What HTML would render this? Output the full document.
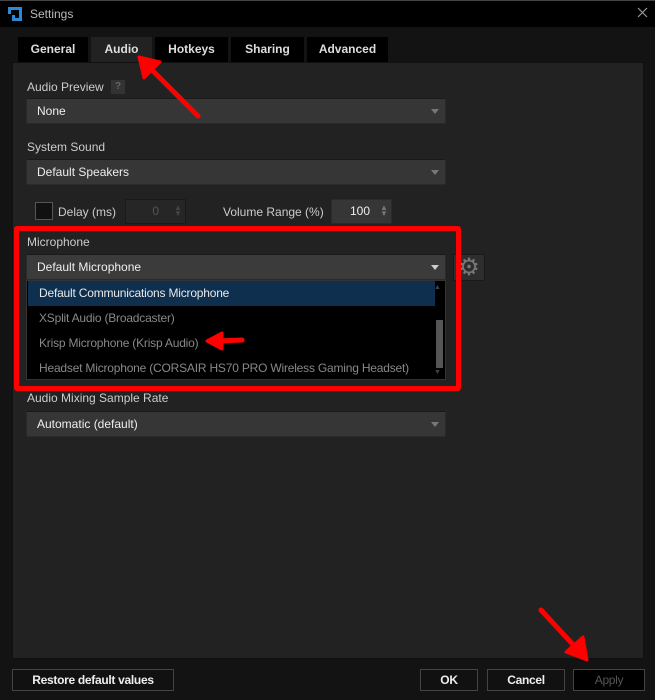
<!DOCTYPE html><html><head><style>
*{box-sizing:border-box;margin:0;padding:0}
body{width:655px;height:700px;background:#131313;font-family:"Liberation Sans",sans-serif;font-size:12px;color:#ccc;position:relative;overflow:hidden}
.a{position:absolute}
.title{left:0;top:0;width:655px;height:27px;background:#000;border-top:1px solid #444}
.tab{top:37px;height:25px;background:#000;color:#ddd;font-weight:bold;text-align:center;line-height:25px;font-size:12px}
.panel{left:12px;top:62px;width:632px;height:597px;background:#222;border:1px solid #111}
.lbl{color:#ccc;font-size:12px}
.dd{left:26px;width:420px;height:26px;background:#363636;border:1px solid #2a2a2a;border-top-color:#1a1a1a;color:#eee;line-height:24px;padding-left:10px}
.dd:after{content:"";position:absolute;right:6px;top:10px;border-left:4px solid transparent;border-right:4px solid transparent;border-top:5px solid #777}
.mic:after{border-top-color:#ccc}
.btn{top:669px;height:22px;border:1px solid #444;background:#111;color:#eee;font-weight:bold;text-align:center;line-height:20px;font-size:12px;letter-spacing:-0.3px}
.it{left:1px;width:406px;height:25px;line-height:25px;padding-left:11px;color:#888;letter-spacing:-0.2px}
</style></head><body>
<div class="a title"></div>
<svg class="a" style="left:7px;top:6px" width="16" height="16" viewBox="0 0 16 16"><path d="M1 1h14v14H8v-3h4V4H4v4H1z" fill="#2a8ad8"/><path d="M5 9h3v6H5z" fill="#2a8ad8"/></svg>
<div class="a" style="left:30px;top:7px;color:#bbb;font-size:12px">Settings</div>
<svg class="a" style="left:637px;top:7px" width="11" height="11"><path d="M1 1L10 10M10 1L1 10" stroke="#999" stroke-width="1.2"/></svg>
<div class="a panel"></div>
<div class="a tab" style="left:18px;width:70px">General</div>
<div class="a tab" style="left:91px;width:61px;background:#222">Audio</div>
<div class="a tab" style="left:155px;width:73px">Hotkeys</div>
<div class="a tab" style="left:231px;width:73px">Sharing</div>
<div class="a tab" style="left:307px;width:81px">Advanced</div>
<div class="a lbl" style="left:27px;top:80px">Audio Preview</div>
<div class="a" style="left:111px;top:80px;width:14px;height:14px;background:#333;color:#666;font-size:10px;text-align:center;line-height:14px;font-weight:bold">?</div>
<div class="a dd" style="top:98px">None</div>
<div class="a lbl" style="left:27px;top:140px">System Sound</div>
<div class="a dd" style="top:159px">Default Speakers</div>
<div class="a" style="left:35px;top:202px;width:18px;height:18px;background:#111;border:1px solid #555"></div>
<div class="a lbl" style="left:58px;top:205px">Delay (ms)</div>
<div class="a" style="left:125px;top:199px;width:61px;height:25px;background:#262626;border:1px solid #1a1a1a;color:#555;text-align:right;padding-right:26px;line-height:23px">0</div>
<div class="a" style="left:174px;top:205px;color:#444;font-size:8px;line-height:6px">▲<br>▼</div>
<div class="a lbl" style="left:223px;top:205px">Volume Range (%)</div>
<div class="a" style="left:331px;top:199px;width:61px;height:25px;background:#363636;border:1px solid #2a2a2a;color:#eee;text-align:right;padding-right:21px;line-height:23px">100</div>
<div class="a" style="left:380px;top:205px;color:#777;font-size:8px;line-height:6px">▲<br>▼</div>
<div class="a lbl" style="left:27px;top:235px">Microphone</div>
<div class="a dd mic" style="top:254px;background:#3b3b3b"><span style="color:#f0f0f0">Default Microphone</span></div>
<div class="a" style="left:453px;top:254px;width:32px;height:27px;background:#2e2e2e;border:1px solid #1a1a1a;color:#777;font-size:24px;text-align:center;line-height:25px">⚙</div>
<div class="a" style="left:26px;top:280px;width:420px;height:100px;background:#000;border:1px solid #333">
<div class="a it" style="top:0;background:#0f2f4f;color:#e8e8e8;width:407px">Default Communications Microphone</div>
<div class="a it" style="top:25px">XSplit Audio (Broadcaster)</div>
<div class="a it" style="top:50px">Krisp Microphone (Krisp Audio)</div>
<div class="a it" style="top:75px">Headset Microphone (CORSAIR HS70 PRO Wireless Gaming Headset)</div>
<div class="a" style="left:409px;top:39px;width:7px;height:48px;background:#555"></div>
<div class="a" style="left:407px;top:3px;color:#444;font-size:7px">▲</div>
<div class="a" style="left:407px;top:88px;color:#444;font-size:7px">▼</div>
</div>
<div class="a" style="left:14px;top:226px;width:447px;height:165px;border:5px solid #f00;border-radius:3px"></div>
<div class="a lbl" style="left:27px;top:391px">Audio Mixing Sample Rate</div>
<div class="a dd" style="top:411px">Automatic (default)</div>
<svg class="a" style="left:0;top:0" width="655" height="700">
<g stroke="#f00" stroke-width="5" stroke-linecap="round" fill="#f00">
<line x1="198" y1="116" x2="150" y2="68"/><polygon points="139,57 160,62 144,78" stroke-width="3" stroke-linejoin="round"/>
<line x1="242" y1="340" x2="218" y2="341"/><polygon points="207,341 222,333 222,349" stroke-width="3" stroke-linejoin="round"/>
<line x1="541" y1="610" x2="578" y2="650"/><polygon points="587,660 566,652 583,637" stroke-width="3" stroke-linejoin="round"/>
</g></svg>
<div class="a btn" style="left:12px;width:162px">Restore default values</div>
<div class="a btn" style="left:420px;width:58px">OK</div>
<div class="a btn" style="left:487px;width:78px">Cancel</div>
<div class="a btn" style="left:573px;width:72px;background:#000;color:#555;font-weight:normal">Apply</div>
</body></html>
